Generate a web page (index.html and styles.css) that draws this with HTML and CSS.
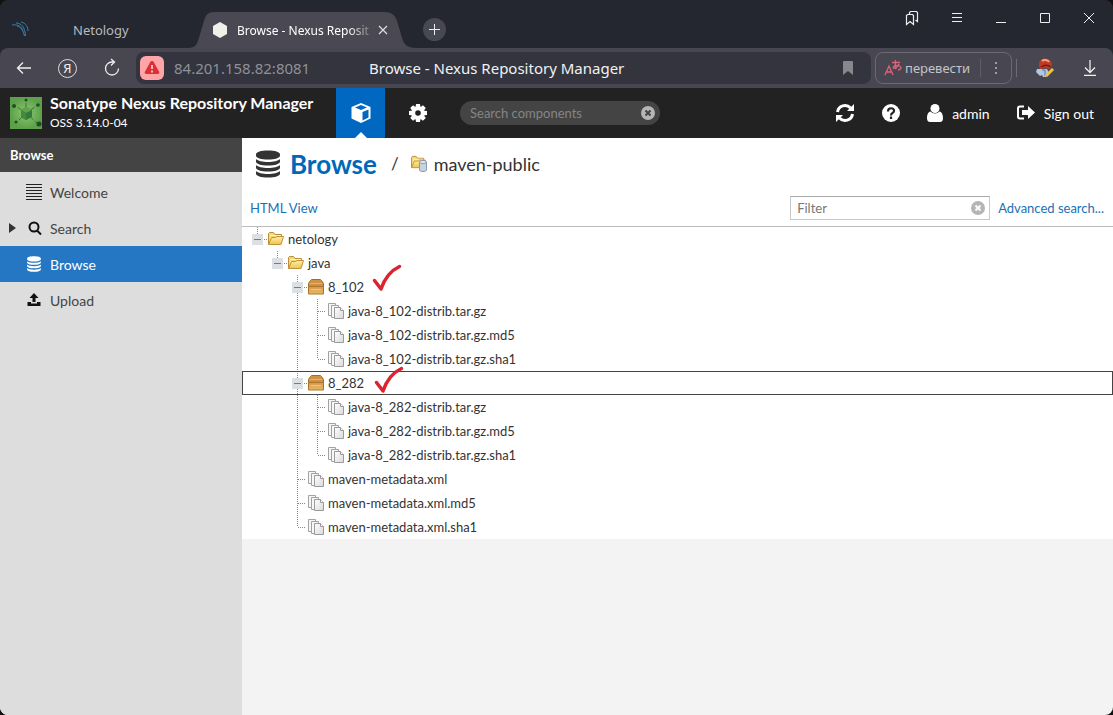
FILE: index.html
```html
<!DOCTYPE html>
<html lang="en">
<head>
<meta charset="utf-8">
<title>Browse - Nexus Repository Manager</title>
<link rel="stylesheet" href="styles.css">
</head>
<body>
<svg class="defs" aria-hidden="true">
  <linearGradient id="paper" x1="0" y1="0" x2="1" y2="1"><stop offset="0" stop-color="#fff"/><stop offset="1" stop-color="#d9d9d9"/></linearGradient>
  <linearGradient id="gold" x1="0" y1="0" x2="0" y2="1"><stop offset="0" stop-color="#fff0a5"/><stop offset="1" stop-color="#efc350"/></linearGradient>
  <linearGradient id="box" x1="0" y1="0" x2="0" y2="1"><stop offset="0" stop-color="#d59a4c"/><stop offset="1" stop-color="#eab869"/></linearGradient>
  <radialGradient id="logo"><stop offset="0" stop-color="#8bc86d"/><stop offset="1" stop-color="#5da04a"/></radialGradient>
  <symbol id="db" viewBox="0 0 24 28"><path d="M0 4.500C0 2 5 .5 12 .5s12 1.500 12 4v1c0 2.500-5 4-12 4s-12-1.500-12-4zM0 9c2 2 6.500 3 12 3s10-1 12-3v2.500c0 2.500-5 4-12 4s-12-1.500-12-4zM0 15c2 2 6.500 3 12 3s10-1 12-3v2.500c0 2.500-5 4-12 4s-12-1.500-12-4zM0 21c2 2 6.500 3 12 3s10-1 12-3v2.500c0 2.500-5 4-12 4s-12-1.500-12-4z"/></symbol>
  <symbol id="folder" viewBox="0 0 16 16"><path d="M.5 13.500v-11l1-1h4l1.500 2h6.500v3" fill="#f6d878" stroke="#bd8d37"/><path d="M2 4.500h11M2 6.500h10" stroke="#fff3ba"/><path d="M.6 13.500 3.500 6.500h4l1.500-1h6.500l-2.500 8z" fill="url(#gold)" stroke="#c0913a"/></symbol>
  <symbol id="package" viewBox="0 0 16 16"><path d="M.5 7.500v-3l2-3 1-1h9l1 1 2 3v3z" fill="#cf9145" stroke="#a86d24"/><path d="M2 4.500h12" stroke="#e3b575"/><path d="M.5 7.500h15v7.500H.5z" fill="url(#box)" stroke="#ae742b"/><path d="M3 10.500h10" stroke="#efc682"/></symbol>
  <symbol id="files" viewBox="0 0 16 16"><path d="M.5 .5h7v12h-7z" fill="#f5f5f5" stroke="#a2a2a2"/><path d="M3.500 2.500h7v12h-7z" fill="#f8f8f8" stroke="#a2a2a2"/><path d="M6.500 4.500h6l3 3v8h-9z" fill="url(#paper)" stroke="#9a9a9a"/><path d="M12.500 4.500v3h3" fill="#fff" stroke="#9a9a9a"/></symbol>
  <symbol id="expander" viewBox="0 0 20 24"><path d="M9.500 0v7" class="dots"/><path d="M16 12.500h4" class="dots"/><path d="M4 7h11v11H4z" fill="#dcdfe3"/><path d="M6 12.500h7" stroke="#747b84"/></symbol>
  <symbol id="expander-open" viewBox="0 0 20 24"><path d="M9.500 0v24M16 12.500h4" class="dots"/><path d="M4 7h11v11H4z" fill="#dcdfe3"/><path d="M6 12.500h7" stroke="#747b84"/></symbol>
  <symbol id="line" viewBox="0 0 20 24"><path d="M9.500 0v24" class="dots"/></symbol>
  <symbol id="tee" viewBox="0 0 20 24"><path d="M9.500 0v24M10 12.500h8" class="dots"/></symbol>
  <symbol id="end" viewBox="0 0 20 24"><path d="M9.500 0v12M10 12.500h8" class="dots"/></symbol>
  <symbol id="clear" viewBox="0 0 16 16"><circle cx="8" cy="8" r="7" fill="#b5b5b5" stroke="none"/><path class="cross" d="m5.500 5.500 5 5m0-5-5 5"/></symbol>
  <symbol id="tick" viewBox="0 0 30 28"><path d="M2.500 16.500 9 25C12 16 18 7 27.500 2.500" fill="none" stroke="#dc232e" stroke-width="3.500" stroke-linecap="round" stroke-linejoin="round"/></symbol>
</svg>

<div class="window">
  <div class="tabbar">
    <div class="tab-idle">
      <svg width="20" height="20" viewBox="0 0 20 20" fill="none" stroke="#3c7faa"><path d="M0 5c6-1 10 2 11 6M4 3c6 0 9 5 9.500 13M9 2c5 1 7 5 7 9M5 6c4 1 6 4 7.500 10"/></svg>
      <span>Netology</span>
    </div>
    <div class="tab-active">
      <svg class="tab-shape" viewBox="0 0 230 36" preserveAspectRatio="none"><path d="M0 36c8 0 9-4 11-10l5-17c2-6 4-9 10-9h171c7 0 11 3 13 9l5 17c2 6 4 10 15 10z" fill="#4a4953"/></svg>
      <svg width="16" height="18" viewBox="0 0 16 18"><path d="m8 1 7 4v8l-7 4-7-4V5z" fill="#edf1e8"/></svg>
      <span class="tab-title">Browse - Nexus Reposit</span>
      <button class="plain" aria-label="Close tab"><svg width="10" height="10" viewBox="0 0 10 10" stroke="#ddd" stroke-width="1.200"><path d="m1 1 8 8m0-8L1 9"/></svg></button>
    </div>
    <button class="newtab" aria-label="New tab"><svg width="11" height="11" viewBox="0 0 11 11" stroke="#eee"><path d="M5.500 0v11M0 5.500h11"/></svg></button>
    <div class="winbtns">
      <button class="plain" aria-label="Bookmarks"><svg width="14" height="16" viewBox="0 0 14 16" fill="none" stroke="#eee" stroke-width="1.200"><path d="M4.500 4V2.500l1-1h6l1 1v9l-2-1.500M1.500 14.500v-9l1-1h5l1 1v9L5 11.500z"/></svg></button>
      <button class="plain" aria-label="Menu"><svg width="12" height="12" viewBox="0 0 12 12" stroke="#eee"><path d="M1 1.500h10M1 5.500h10M1 9.500h10"/></svg></button>
      <button class="plain" aria-label="Minimize"><svg width="12" height="12" viewBox="0 0 12 12" stroke="#eee"><path d="M1 10.500h10"/></svg></button>
      <button class="plain" aria-label="Maximize"><svg width="12" height="12" viewBox="0 0 12 12" fill="none" stroke="#eee"><path d="M1.500 1.500h9v9h-9z"/></svg></button>
      <button class="plain" aria-label="Close"><svg width="12" height="12" viewBox="0 0 12 12" stroke="#eee"><path d="m1 1 10 10m0-10L1 11"/></svg></button>
    </div>
  </div>

  <div class="toolbar">
    <div class="nav">
      <button class="plain" aria-label="Back"><svg width="16" height="16" viewBox="0 0 16 16" fill="none" stroke="#eee" stroke-width="1.300"><path d="M15 8H1.500M7 2.500 1.500 8 7 13.500"/></svg></button>
      <button class="yandex">Я</button>
      <button class="plain" aria-label="Reload"><svg width="18" height="20" viewBox="0 0 18 20" fill="none" stroke="#eee" stroke-width="1.300"><path d="M15.500 10.500A6.500 6.500 0 1 1 9 4h2M8 1l3.500 3L8 7.500"/></svg></button>
    </div>
    <div class="omnibox">
      <span class="warn"><svg width="16" height="14" viewBox="0 0 16 14"><path d="M8 0c1 0 1.500.5 2 1.500l5 9c.8 1.500.2 2.500-1.500 2.500h-11C.8 13 .2 12 1 10.500l5-9C6.500.5 7 0 8 0z" fill="#dc3038"/><path d="M8 4v4M8 9.500v2" stroke="#ffb5b5" stroke-width="2"/></svg></span>
      <span class="url">84.201.158.82:8081</span>
      <span class="page-title">Browse - Nexus Repository Manager</span>
      <svg class="mark" width="10" height="14" viewBox="0 0 10 14"><path d="M0 1q0-1 1-1h8q1 0 1 1v13l-5-4-5 4z" fill="#88878e"/></svg>
    </div>
    <div class="translate">
      <svg width="18" height="18" viewBox="0 0 18 18" fill="none" stroke="#e0627a" stroke-width="1.300"><path d="M1 16 5 7l4 9M2.500 13h5M8 3.500h8M11.500 1c-.5 3-.3 6 .5 9M15 5c-1 3-4 5-5.500 4S12 5 15.500 7s0 4-1.500 4"/></svg>
      <button class="plain">перевести</button>
      <span class="vr"></span>
      <button class="plain more" aria-label="More"><svg width="4" height="14" viewBox="0 0 4 14" fill="#bbb"><circle cx="2" cy="2" r="1"/><circle cx="2" cy="7" r="1"/><circle cx="2" cy="12" r="1"/></svg></button>
    </div>
    <span class="vr tall"></span>
    <div class="ext">
      <svg width="20" height="20" viewBox="0 0 20 20"><path d="M2 11h10l2 4-3 4H8l-1-2-2 1-4-4z" fill="#b6c6df"/><path d="M7 12h3v6" stroke="#4779bd" fill="none"/><path d="M4 6c0-3 2-5.500 6-5.500S17 3 17 7c0 3-2 4-4 4l-2-1-5 1C4 10 4 8 4 6z" fill="#bd3a24"/><path d="M7 3c2-2 6-1 7 1" stroke="#f3a282" stroke-width="2" fill="none"/><path d="M6 9c3-2 7-2 10 0" stroke="#6b211a" stroke-width="1.500" fill="none"/><path d="m11 18 7-7" stroke="#ebc63c" stroke-width="3"/></svg>
      <svg width="14" height="16" viewBox="0 0 14 16" fill="none" stroke="#eee" stroke-width="1.300"><path d="M7 0v12M2 7.500l5 5 5-5M1 15.300h12"/></svg>
    </div>
  </div>

  <header class="header">
    <svg width="32" height="32" viewBox="0 0 32 32"><path d="M0 0h32v32H0z" fill="url(#logo)"/><path d="m16 16 11 10M16 16 6 26M16 16 4 8M16 16l12-8M16 16V3" stroke="#397334" stroke-dasharray="4 2"/><path d="m16 10 6 3v7l-6 3-5-3v-7z" fill="#357839"/><path d="m16 10 6 3-6 3-5-3z" fill="#5fa350"/><path d="M16 16v7l-5-3v-7z" fill="#44893f"/><g fill="#224e25"><circle cx="4" cy="9" r="2"/><circle cx="28" cy="8" r="1.800"/><circle cx="16" cy="3" r="1.500"/><circle cx="6" cy="25" r="1.500"/><circle cx="29" cy="27" r="2.500"/></g></svg>
    <div class="brand"><strong>Sonatype Nexus Repository Manager</strong><small>OSS 3.14.0-04</small></div>
    <button class="mode active" aria-label="Browse mode"><svg width="20" height="20" viewBox="0 0 20 20"><path d="m10 0 9.500 4v11.500L10 20 .5 15.500V4z" fill="#fff"/><path d="m10 2 6 2.500-6 2.500-6-2.500zM11.500 9l6-2.500v8l-6 3z" fill="#0068c0"/></svg></button>
    <button class="mode" aria-label="Administration"><svg width="20" height="20" viewBox="-10 -10 20 20"><g fill="#fff"><path d="M-2-9h4l.6 4h-5.200zM-2 9h4l.6-4h-5.200z"/><path d="M-2-9h4l.6 4h-5.200zM-2 9h4l.6-4h-5.200z" transform="rotate(45)"/><path d="M-2-9h4l.6 4h-5.200zM-2 9h4l.6-4h-5.200z" transform="rotate(90)"/><path d="M-2-9h4l.6 4h-5.200zM-2 9h4l.6-4h-5.200z" transform="rotate(135)"/></g><circle r="4.800" fill="none" stroke="#fff" stroke-width="4"/></svg></button>
    <div class="search"><input aria-label="Search components" placeholder="Search components"><svg class="on-dark" width="16" height="16"><use href="#clear"/></svg></div>
    <div class="user">
      <button class="plain" aria-label="Refresh"><svg width="20" height="20" viewBox="0 0 20 20"><path d="M2.500 9A7.500 7.500 0 0 1 15.500 5M17.500 11A7.500 7.500 0 0 1 4.500 15" fill="none" stroke="#fff" stroke-width="3"/><path d="M19 1v7h-7zM1 19v-7h7z" fill="#fff"/></svg></button>
      <button class="plain" aria-label="Help"><svg width="18" height="18" viewBox="0 0 18 18"><circle cx="9" cy="9" r="9" fill="#fff"/><path d="M6 7.500C6 3 12.500 3.500 12 7c0 2-3 2-3 4.500M9 12.500V15" fill="none" stroke="#222" stroke-width="2.200"/></svg></button>
      <button class="plain"><svg width="16" height="18" viewBox="0 0 16 18" fill="#fff"><circle cx="8" cy="4.500" r="4.500"/><path d="M3.500 7.500C1 8 0 11 0 14c0 2.500 1 4 3 4h10c2 0 3-1.500 3-4 0-3-1-6-3.500-6.500-2.500 2.500-6.500 2.500-9 0z"/></svg>admin</button>
      <button class="plain"><svg width="18" height="16" viewBox="0 0 18 16"><path d="M7 1.500H3q-2 0-2 2v8q0 2 2 2h4" fill="none" stroke="#fff" stroke-width="2"/><path d="M5 5h6V1l7 6.500L11 14v-4H5z" fill="#fff"/></svg>Sign out</button>
    </div>
  </header>

  <div class="body">
    <nav class="side">
      <h2>Browse</h2>
      <ul>
        <li><a href="#"><span class="arrow"></span><svg width="16" height="16" viewBox="0 0 16 16" stroke="#222"><path d="M0 .5h16M0 3.500h16M0 6.500h16M0 9.500h16M0 12.500h16M0 15.500h16"/></svg>Welcome</a></li>
        <li><a href="#"><span class="arrow"><svg width="7" height="10" viewBox="0 0 7 10"><path d="m0 0 7 5-7 5z" fill="#333"/></svg></span><svg width="16" height="16" viewBox="0 0 16 16" fill="none" stroke="#111" stroke-width="2"><circle cx="8" cy="7" r="4.500"/><path d="m11 10.500 4 4"/></svg>Search</a></li>
        <li><a class="selected" href="#"><span class="arrow"></span><svg width="16" height="16" fill="#fff"><use href="#db"/></svg>Browse</a></li>
        <li><a href="#"><span class="arrow"></span><svg width="16" height="14" viewBox="0 0 16 14" fill="#111"><path d="M8 0l4.500 5h-3v4h-3V5h-3zM1.500 9H5v1.500h6V9h3.500v4h-13z"/></svg>Upload</a></li>
      </ul>
    </nav>
    <main class="main">
      <div class="heading">
        <svg width="24" height="28" fill="#333"><use href="#db"/></svg>
        <h1>Browse</h1><span class="slash">/</span>
        <svg width="17" height="17" viewBox="0 0 17 17"><use href="#folder" width="15" height="15"/><path d="M8.500 7v8c0 2 7 2 7 0V7z" fill="#c8d3dd" stroke="#8999a8"/><ellipse cx="12" cy="7" rx="3.500" ry="1.500" fill="#e9f0f5" stroke="#8999a8"/></svg>
        <span class="repo">maven-public</span>
      </div>
      <div class="filterbar">
        <a href="#">HTML View</a>
        <div class="filter"><input aria-label="Filter" placeholder="Filter"><svg class="on-light" width="16" height="16"><use href="#clear"/></svg></div>
        <a href="#">Advanced search...</a>
      </div>
      <ul class="tree">
        <li><svg class="c"><use href="#expander"/></svg><svg class="i"><use href="#folder"/></svg>netology</li>
        <li><i></i><svg class="c"><use href="#expander"/></svg><svg class="i"><use href="#folder"/></svg>java</li>
        <li><i></i><i></i><svg class="c"><use href="#expander-open"/></svg><svg class="i"><use href="#package"/></svg><span class="checked">8_102<svg class="tick"><use href="#tick"/></svg></span></li>
        <li><i></i><i></i><svg class="c"><use href="#line"/></svg><svg class="c"><use href="#tee"/></svg><svg class="i"><use href="#files"/></svg>java-8_102-distrib.tar.gz</li>
        <li><i></i><i></i><svg class="c"><use href="#line"/></svg><svg class="c"><use href="#tee"/></svg><svg class="i"><use href="#files"/></svg>java-8_102-distrib.tar.gz.md5</li>
        <li><i></i><i></i><svg class="c"><use href="#line"/></svg><svg class="c"><use href="#end"/></svg><svg class="i"><use href="#files"/></svg>java-8_102-distrib.tar.gz.sha1</li>
        <li class="focused"><i></i><i></i><svg class="c"><use href="#expander-open"/></svg><svg class="i"><use href="#package"/></svg><span class="checked">8_282<svg class="tick low"><use href="#tick"/></svg></span></li>
        <li><i></i><i></i><svg class="c"><use href="#line"/></svg><svg class="c"><use href="#tee"/></svg><svg class="i"><use href="#files"/></svg>java-8_282-distrib.tar.gz</li>
        <li><i></i><i></i><svg class="c"><use href="#line"/></svg><svg class="c"><use href="#tee"/></svg><svg class="i"><use href="#files"/></svg>java-8_282-distrib.tar.gz.md5</li>
        <li><i></i><i></i><svg class="c"><use href="#line"/></svg><svg class="c"><use href="#end"/></svg><svg class="i"><use href="#files"/></svg>java-8_282-distrib.tar.gz.sha1</li>
        <li><i></i><i></i><svg class="c"><use href="#tee"/></svg><svg class="i"><use href="#files"/></svg>maven-metadata.xml</li>
        <li><i></i><i></i><svg class="c"><use href="#tee"/></svg><svg class="i"><use href="#files"/></svg>maven-metadata.xml.md5</li>
        <li><i></i><i></i><svg class="c"><use href="#end"/></svg><svg class="i"><use href="#files"/></svg>maven-metadata.xml.sha1</li>
      </ul>
    </main>
  </div>
</div>
</body>
</html>
```
FILE: styles.css
```css
* { box-sizing: border-box; }
body { margin: 0; background: #111; font-family: Lato, "Open Sans", sans-serif; font-size: 14px; color: #333; }
ul, h1, h2 { margin: 0; padding: 0; list-style: none; }
svg { flex: none; display: block; }
a { color: #1b70b3; text-decoration: none; }
button { font: inherit; color: inherit; border: 0; margin: 0; padding: 0; display: flex; align-items: center; justify-content: center; }
.plain { background: none; }
.defs { position: absolute; width: 0; height: 0; }
.dots { stroke: #888; stroke-dasharray: 1 1; fill: none; }

.window { min-height: 100vh; display: flex; flex-direction: column; border-radius: 8px; overflow: hidden; background: #24272f; }

.tabbar { height: 48px; display: flex; align-items: flex-end; font-family: "Noto Sans", sans-serif; font-size: 13px; color: #b9babd; }
.tab-idle { width: 188px; height: 36px; padding-left: 12px; display: flex; align-items: center; gap: 41px; }
.tab-active { position: relative; width: 229px; height: 36px; padding: 0 29px 0 24px; display: flex; align-items: center; gap: 9px; color: #fff; }
.tab-active > * { position: relative; }
.tab-active .tab-shape { position: absolute; inset: 0; width: 100%; height: 100%; }
.tab-title { flex: 1; min-width: 0; white-space: nowrap; font-size: 12px; mask-image: linear-gradient(to right, #000 84%, #0004); }
.newtab { width: 23px; height: 23px; border-radius: 50%; background: #474853; margin: 0 0 7px 6px; }
.winbtns { margin-left: auto; align-self: flex-start; height: 36px; padding-right: 18px; display: flex; align-items: center; gap: 32px; }

.toolbar { height: 40px; display: flex; align-items: center; background: #484751; border-radius: 8px 8px 0 0; font-family: "Noto Sans", sans-serif; padding-right: 16px; }
.nav { width: 136px; padding-left: 16px; display: flex; align-items: center; gap: 26px; }
.yandex { width: 19px; height: 19px; border: 1px solid #ddd; border-radius: 50%; background: none; color: #eee; font-size: 13px; }
.omnibox { flex: 1; height: 32px; padding: 0 18px 0 4px; display: flex; align-items: center; background: #33343e; border-radius: 8px; font-size: 15px; }
.warn { width: 24px; height: 24px; border-radius: 6px; background: #ffa5a8; display: flex; align-items: center; justify-content: center; }
.url { width: 205px; padding-left: 10px; color: #8f9097; }
.page-title { color: #f1f1f3; white-space: nowrap; }
.mark { margin-left: auto; }
.translate { width: 137px; height: 32px; margin: 0 4px; padding: 0 13px 0 8px; display: flex; align-items: center; border: 1px solid #6b6a73; border-radius: 8px; color: #c4c4ca; font-size: 13px; gap: 3px; }
.vr { width: 1px; height: 18px; background: #5e5d66; margin-left: 7px; }
.vr.tall { margin: 0; background: #6d6c75; }
.more { margin-left: auto; }
.ext { margin-left: 18px; display: flex; align-items: center; gap: 28px; }

.header { height: 50px; display: flex; align-items: center; background: #222; color: #fff; padding-left: 10px; }
.brand { width: 286px; padding-left: 8px; display: flex; flex-direction: column; justify-content: center; line-height: 20px; }
.brand strong { font-size: 16px; white-space: nowrap; }
.brand small { font-size: 12px; }
.mode { position: relative; width: 49px; height: 50px; background: none; margin-left: 8px; }
.mode.active { background: #0068c0; }
.mode.active::after { content: ""; position: absolute; bottom: 0; left: 19px; border: solid transparent; border-width: 0 6px 6px; border-bottom-color: #fff; }
.brand + .mode { margin-left: 8px; }
.search { width: 200px; height: 24px; margin-left: 18px; padding: 0 4px 0 10px; display: flex; align-items: center; background: #444; border-radius: 12px; font-size: 13px; }
input { flex: 1; min-width: 0; border: 0; padding: 0; background: none; font: inherit; color: inherit; outline: 0; }
.search input::placeholder { color: #858585; opacity: 1; }
.cross { stroke-width: 2; fill: none; }
.on-dark { stroke: #444; }
.on-light { stroke: #fff; }
.user { margin-left: auto; padding-right: 19px; display: flex; align-items: center; gap: 27px; }
.user .plain { gap: 9px; }

.body { flex: 1; display: flex; background: #f3f3f3; }
.side { width: 242px; background: #ddd; }
.side h2 { height: 34px; padding-left: 10px; background: #444; color: #fff; font-size: 13px; line-height: 34px; }
.side ul { padding-top: 2px; }
.side a { height: 36px; display: flex; align-items: center; color: #444; font-size: 14px; gap: 8px; }
.side .arrow { width: 18px; padding-left: 9px; }
.side a.selected { background: #2576c3; color: #fff; }
.main { flex: 1; min-width: 0; }
.heading { height: 51px; padding-left: 14px; display: flex; align-items: center; background: #fff; }
.heading h1 { margin-left: 10px; font-size: 26px; color: #0068b8; }
.slash { margin: 0 12px 0 14px; font-size: 17px; }
.repo { margin-left: 6px; font-size: 18px; }
.filterbar { height: 38px; padding: 0 9px 0 8px; display: flex; align-items: center; gap: 8px; background: #fff; border-bottom: 1px solid #bbb; font-size: 13px; }
.filter { width: 200px; height: 24px; margin-left: auto; padding: 0 3px 0 6px; display: flex; align-items: center; border: 1px solid #c8c8c8; border-top-color: #aaa; }
.filter input::placeholder { color: #777; opacity: 1; }
.tree { background: #fff; font-size: 13px; }
.tree li { height: 24px; padding-left: 6px; display: flex; align-items: center; }
.tree i, .c { width: 20px; height: 24px; flex: none; }
.i { width: 16px; height: 16px; margin-right: 4px; }
.tree .focused { outline: 1px solid #444; outline-offset: -1px; }
.checked { position: relative; }
.tick { position: absolute; left: 44px; top: -15px; width: 30px; height: 28px; }
.tick.low { left: 46px; top: -9px; }
```
